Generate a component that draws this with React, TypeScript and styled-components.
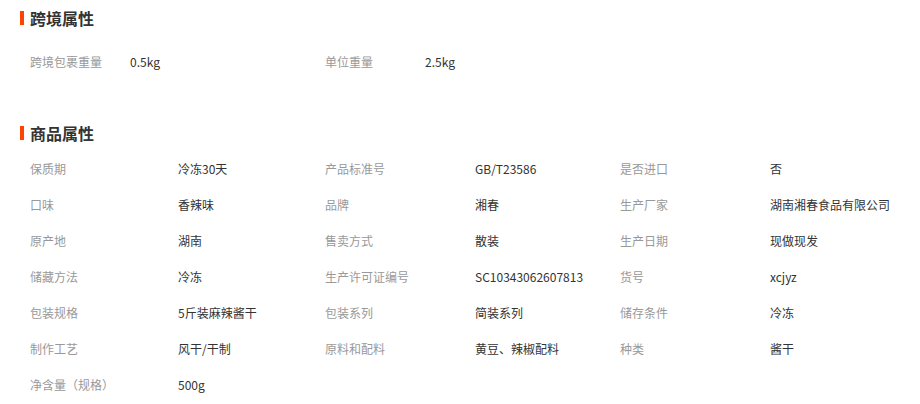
import styled, { createGlobalStyle } from "styled-components";

const GlobalStyle = createGlobalStyle`
  body {
    margin: 0;
    background: #fff;
    font-family: "Noto Sans CJK SC", "Liberation Sans", sans-serif;
  }
`;

type Prop = { label: string; value: string };

const crossBorder: Prop[] = [
  { label: "跨境包裹重量", value: "0.5kg" },
  { label: "单位重量", value: "2.5kg" },
];

const goods: Prop[] = [
  { label: "保质期", value: "冷冻30天" },
  { label: "产品标准号", value: "GB/T23586" },
  { label: "是否进口", value: "否" },
  { label: "口味", value: "香辣味" },
  { label: "品牌", value: "湘春" },
  { label: "生产厂家", value: "湖南湘春食品有限公司" },
  { label: "原产地", value: "湖南" },
  { label: "售卖方式", value: "散装" },
  { label: "生产日期", value: "现做现发" },
  { label: "储藏方法", value: "冷冻" },
  { label: "生产许可证编号", value: "SC10343062607813" },
  { label: "货号", value: "xcjyz" },
  { label: "包装规格", value: "5斤装麻辣酱干" },
  { label: "包装系列", value: "简装系列" },
  { label: "储存条件", value: "冷冻" },
  { label: "制作工艺", value: "风干/干制" },
  { label: "原料和配料", value: "黄豆、辣椒配料" },
  { label: "种类", value: "酱干" },
  { label: "净含量（规格）", value: "500g" },
];

export default function App() {
  return (
    <>
      <GlobalStyle />
      <Page>
        <Section $gapAfter={35}>
          <Title>跨境属性</Title>
          <PropGrid $cols="100px 195px 100px 1fr" $padTop={8}>
            {crossBorder.map((p) => (
              <Pair key={p.label}>
                <Label>{p.label}</Label>
                <Value>{p.value}</Value>
              </Pair>
            ))}
          </PropGrid>
        </Section>
        <Section $gapAfter={0}>
          <Title>商品属性</Title>
          <PropGrid $cols="148px 147px 150px 145px 150px 1fr" $padTop={0}>
            {goods.map((p) => (
              <Pair key={p.label}>
                <Label>{p.label}</Label>
                <Value>{p.value}</Value>
              </Pair>
            ))}
          </PropGrid>
        </Section>
      </Page>
    </>
  );
}

const Page = styled.div`
  width: 920px;
  padding-left: 20px;
  box-sizing: border-box;
`;

const Section = styled.section<{ $gapAfter: number }>`
  margin-bottom: ${(props) => props.$gapAfter}px;
`;

const Title = styled.h3`
  margin: 0;
  height: 36px;
  display: flex;
  align-items: center;
  gap: 6px;
  font-size: 16px;
  font-weight: 700;
  color: #333;
  &::before {
    content: "";
    width: 4px;
    height: 14px;
    background: #ff4400;
  }
`;

const PropGrid = styled.div<{ $cols: string; $padTop: number }>`
  display: grid;
  grid-template-columns: ${(props) => props.$cols};
  grid-auto-rows: 36px;
  padding: ${(props) => props.$padTop}px 0 0 10px;
`;

const Pair = styled.div`
  display: contents;
`;

const Label = styled.div`
  display: flex;
  align-items: center;
  padding-bottom: 2px;
  font-size: 12px;
  color: #999;
  white-space: nowrap;
`;

const Value = styled.div`
  display: flex;
  align-items: center;
  padding-bottom: 2px;
  font-size: 12px;
  color: #333;
  white-space: nowrap;
`;
